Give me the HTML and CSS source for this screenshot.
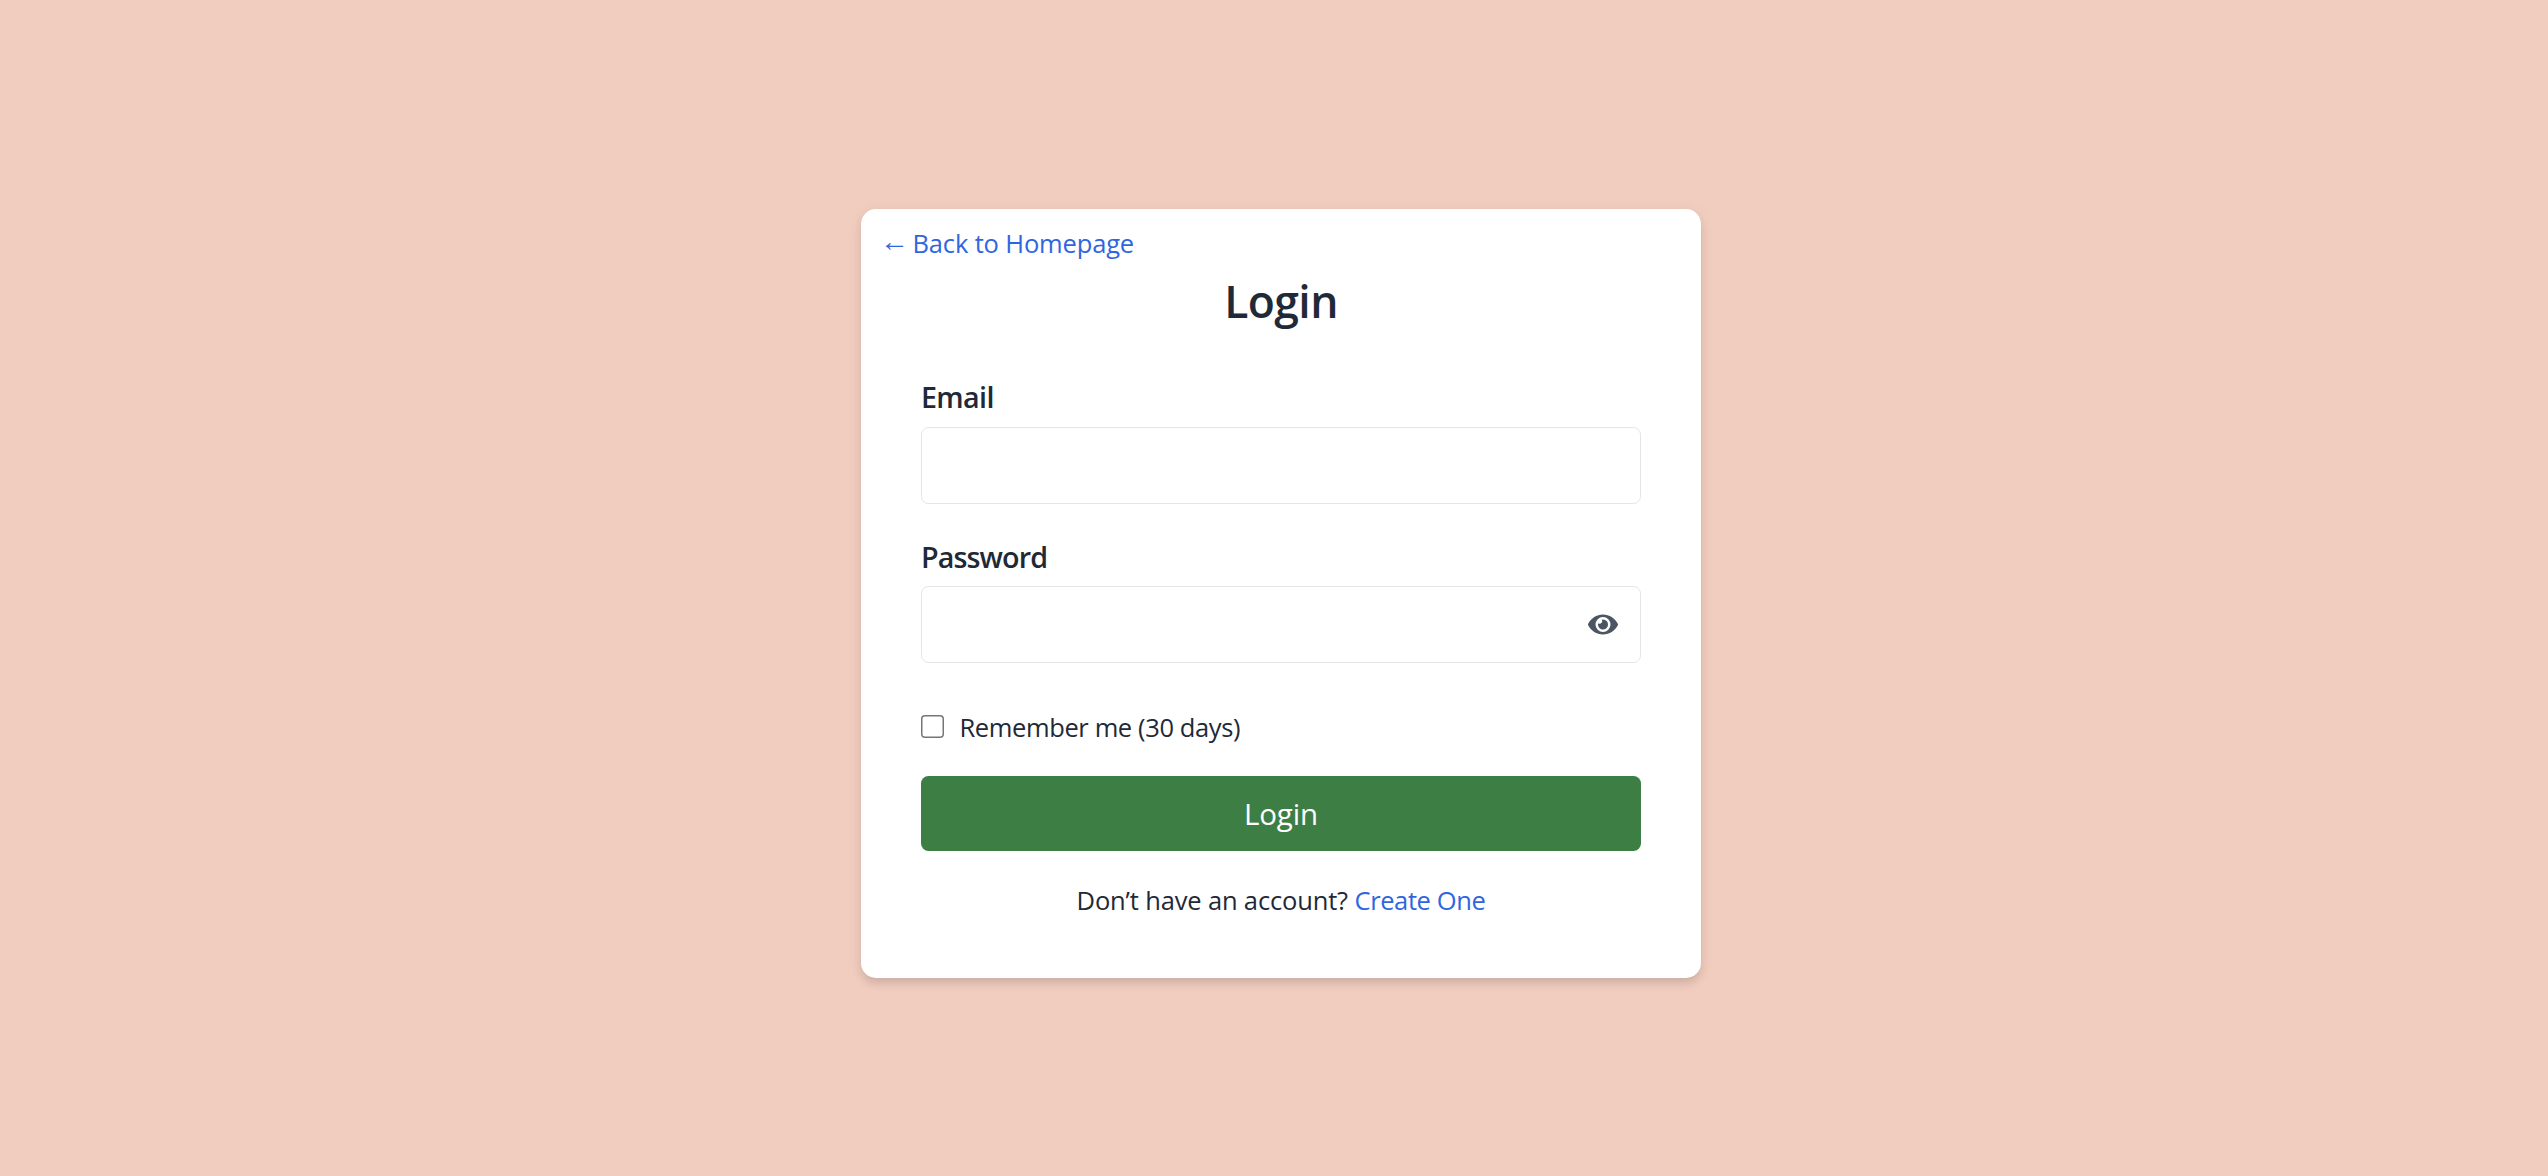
FILE: index.html
```
<!DOCTYPE html>
<html lang="en">
<head>
<meta charset="utf-8">
<title>Login</title>
<link rel="stylesheet" href="styles.css">
</head>
<body>
<main class="card">
  <a class="back" href="#"><span class="arrow">←</span><span>Back to Homepage</span></a>
  <h1 class="title">Login</h1>
  <form class="form">
    <label class="label label-email" for="email">Email</label>
    <input class="input" id="email" type="email">
    <label class="label label-password" for="password">Password</label>
    <div class="input password-field">
      <input class="password-input" id="password" type="password">
      <svg class="eye" viewBox="0 0 576 512" aria-hidden="true"><path fill="currentColor" d="M572.52 241.4C518.29 135.59 410.93 64 288 64S57.68 135.64 3.48 241.41a32.35 32.35 0 0 0 0 29.19C57.71 376.41 165.07 448 288 448s230.32-71.64 284.52-177.41a32.35 32.35 0 0 0 0-29.19zM288 400a144 144 0 1 1 144-144 143.93 143.93 0 0 1-144 144zm0-240a95.31 95.31 0 0 0-25.31 3.79 47.85 47.85 0 0 1-66.9 66.9A95.78 95.78 0 1 0 288 160z"/></svg>
    </div>
    <label class="remember"><input class="checkbox" type="checkbox"><span>Remember me (30 days)</span></label>
    <button class="submit" type="button">Login</button>
    <p class="signup">Don’t have an account? <a class="create" href="#">Create One</a></p>
  </form>
</main>
</body>
</html>
```
FILE: styles.css
```
* { box-sizing: border-box; }

body {
  margin: 0;
  min-height: 100vh;
  padding: 11px 0 0 14px;
  display: flex;
  align-items: center;
  justify-content: center;
  background: #f1cdbf;
  color: #1f2937;
  font-family: "Open Sans", "Noto Sans", sans-serif;
  font-size: 25.5px;
  line-height: 36px;
}

.card {
  width: 840px;
  padding: 16px 60px 60px;
  display: flex;
  flex-direction: column;
  background: #fff;
  border-radius: 15px;
  box-shadow: 0 6px 9px -1.5px rgba(0, 0, 0, 0.1), 0 3px 15px rgba(0, 0, 0, 0.07);
}

a { color: #2f66e0; text-decoration: none; }

.back {
  align-self: flex-start;
  margin-left: -41px;
  display: flex;
  letter-spacing: -0.15px;
}

.arrow {
  width: 32.5px;
  font-family: "Liberation Sans", sans-serif;
  font-size: 29px;
  line-height: 33px;
}

.title {
  margin: 10px 0 44px;
  font-size: 44.5px;
  line-height: 60px;
  font-weight: 600;
  letter-spacing: -0.6px;
  text-align: center;
}

.form { display: flex; flex-direction: column; }

.label {
  font-size: 28.7px;
  line-height: 44px;
  font-weight: 600;
}

.label-email { margin-bottom: 8px; letter-spacing: -0.65px; }
.label-password { margin: 31px 0 7px; letter-spacing: -0.9px; }

.input {
  width: 100%;
  height: 77px;
  padding: 0 22px;
  border: 1px solid #e5e5e5;
  border-radius: 7.5px;
  background: #fff;
  font: inherit;
}

.password-field {
  display: flex;
  align-items: center;
}

.password-input {
  flex: 1;
  height: 100%;
  padding: 0;
  border: 0;
  background: none;
  font: inherit;
}

.eye {
  width: 30px;
  height: 27px;
  color: #4b5563;
}

.remember {
  margin: 46px 0 31px;
  display: flex;
  align-items: flex-start;
  gap: 15.5px;
  letter-spacing: -0.38px;
}

.checkbox {
  appearance: none;
  width: 23px;
  height: 23px;
  margin: 6px 0 0;
  border-radius: 4px;
  background: #fff;
  box-shadow: inset 0 0 0 1.5px #767676;
}

.submit {
  height: 75px;
  padding: 0;
  border: 0;
  border-radius: 7.5px;
  background: #3d7e45;
  color: #fff;
  font-family: inherit;
  font-size: 29.5px;
  line-height: 44px;
  letter-spacing: -0.1px;
}

.signup {
  margin: 31px 0 0;
  text-align: center;
  letter-spacing: -0.15px;
}

.create { letter-spacing: -0.38px; }
```
